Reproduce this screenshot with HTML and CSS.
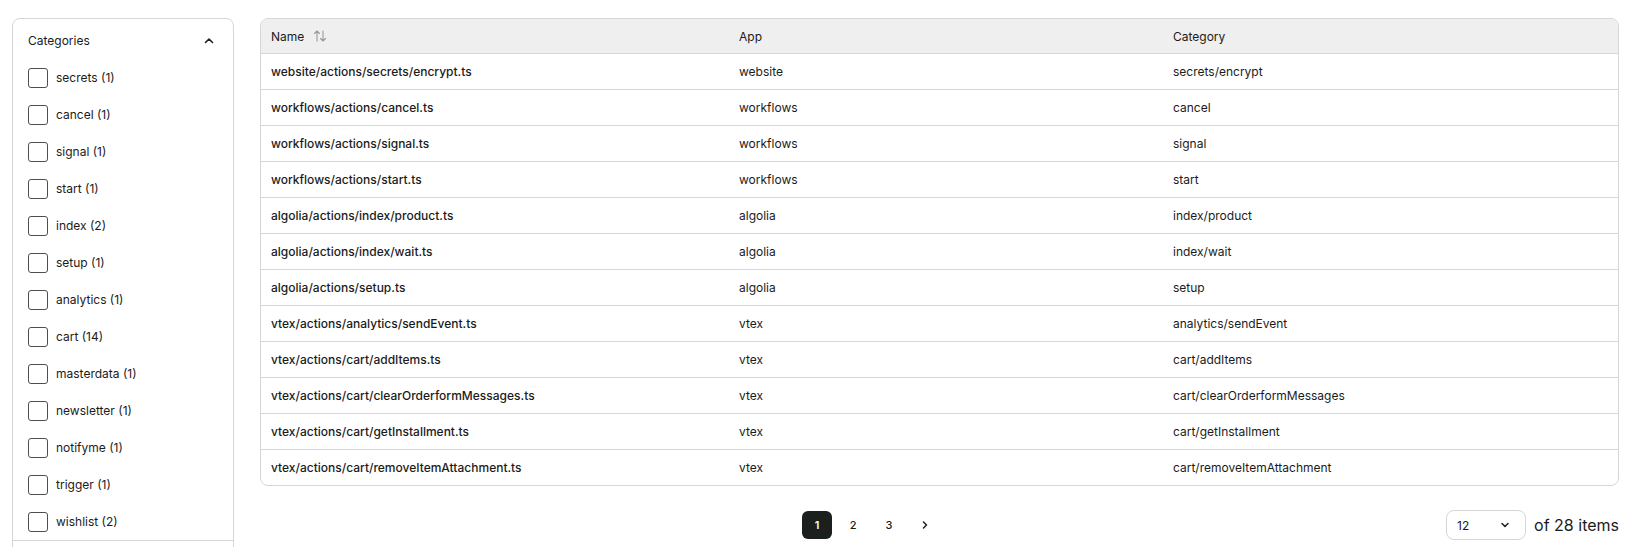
FILE: index.html
```html
<!DOCTYPE html>
<html lang="en">
<head>
    <meta charset="UTF-8">
    <meta name="viewport" content="width=device-width, initial-scale=1.0">
    <title>Actions</title>
    <link rel="stylesheet" href="styles.css">
</head>
<body>
    <div class="layout">
        <aside class="sidebar">
            <div class="filter-header">
                <span>Categories</span>
                <svg class="chevron" width="12" height="12" viewBox="0 0 12 12"><path d="M2.5 7.5L6 4l3.5 3.5" fill="none" stroke="#1f1f1f" stroke-width="1.6" stroke-linecap="round" stroke-linejoin="round"/></svg>
            </div>
            <ul class="filter-list">
                <li><span class="checkbox"></span>secrets (1)</li>
                <li><span class="checkbox"></span>cancel (1)</li>
                <li><span class="checkbox"></span>signal (1)</li>
                <li><span class="checkbox"></span>start (1)</li>
                <li><span class="checkbox"></span>index (2)</li>
                <li><span class="checkbox"></span>setup (1)</li>
                <li><span class="checkbox"></span>analytics (1)</li>
                <li><span class="checkbox"></span>cart (14)</li>
                <li><span class="checkbox"></span>masterdata (1)</li>
                <li><span class="checkbox"></span>newsletter (1)</li>
                <li><span class="checkbox"></span>notifyme (1)</li>
                <li><span class="checkbox"></span>trigger (1)</li>
                <li><span class="checkbox"></span>wishlist (2)</li>
            </ul>
            <div class="filter-section"></div>
        </aside>

        <main class="content">
            <div class="table-card">
                <table>
                    <colgroup>
                        <col class="col-name">
                        <col class="col-app">
                        <col>
                    </colgroup>
                    <thead>
                        <tr>
                            <th>
                                <span class="sortable">Name
                                    <svg width="14" height="14" viewBox="0 0 14 14"><path d="M4 12V2M1.5 4.5L4 2l2.5 2.5M10 2v10M7.5 9.5L10 12l2.5-2.5" fill="none" stroke="#9a9a9a" stroke-width="1.1" stroke-linecap="round" stroke-linejoin="round"/></svg>
                                </span>
                            </th>
                            <th>App</th>
                            <th>Category</th>
                        </tr>
                    </thead>
                    <tbody>
                        <tr><td class="name">website/actions/secrets/encrypt.ts</td><td>website</td><td>secrets/encrypt</td></tr>
                        <tr><td class="name">workflows/actions/cancel.ts</td><td>workflows</td><td>cancel</td></tr>
                        <tr><td class="name">workflows/actions/signal.ts</td><td>workflows</td><td>signal</td></tr>
                        <tr><td class="name">workflows/actions/start.ts</td><td>workflows</td><td>start</td></tr>
                        <tr><td class="name">algolia/actions/index/product.ts</td><td>algolia</td><td>index/product</td></tr>
                        <tr><td class="name">algolia/actions/index/wait.ts</td><td>algolia</td><td>index/wait</td></tr>
                        <tr><td class="name">algolia/actions/setup.ts</td><td>algolia</td><td>setup</td></tr>
                        <tr><td class="name">vtex/actions/analytics/sendEvent.ts</td><td>vtex</td><td>analytics/sendEvent</td></tr>
                        <tr><td class="name">vtex/actions/cart/addItems.ts</td><td>vtex</td><td>cart/addItems</td></tr>
                        <tr><td class="name">vtex/actions/cart/clearOrderformMessages.ts</td><td>vtex</td><td>cart/clearOrderformMessages</td></tr>
                        <tr><td class="name">vtex/actions/cart/getInstallment.ts</td><td>vtex</td><td>cart/getInstallment</td></tr>
                        <tr><td class="name">vtex/actions/cart/removeItemAttachment.ts</td><td>vtex</td><td>cart/removeItemAttachment</td></tr>
                    </tbody>
                </table>
            </div>

            <div class="table-footer">
                <nav class="pager">
                    <button class="page-btn hidden">
                        <svg width="10" height="10" viewBox="0 0 10 10"><path d="M6.5 2L3.5 5l3 3" fill="none" stroke="#1f1f1f" stroke-width="1.5" stroke-linecap="round" stroke-linejoin="round"/></svg>
                    </button>
                    <button class="page-btn active">1</button>
                    <button class="page-btn">2</button>
                    <button class="page-btn">3</button>
                    <button class="page-btn">
                        <svg width="10" height="10" viewBox="0 0 10 10"><path d="M3.5 2l3 3-3 3" fill="none" stroke="#1f1f1f" stroke-width="1.5" stroke-linecap="round" stroke-linejoin="round"/></svg>
                    </button>
                </nav>
                <div class="per-page">
                    <div class="select">
                        <span>12</span>
                        <svg width="12" height="12" viewBox="0 0 12 12"><path d="M3 4.5L6 7.5l3-3" fill="none" stroke="#1f1f1f" stroke-width="1.5" stroke-linecap="round" stroke-linejoin="round"/></svg>
                    </div>
                    <span class="total">of 28 items</span>
                </div>
            </div>
        </main>
    </div>
</body>
</html>
```

FILE: styles.css
```css
:root {
    --text-color: #1b1b1b;
    --border-color: #d5d7d7;
    --header-bg: #efefef;
    --radius: 8px;
}

html, body {
    height: 100%;
}

body {
    font-family: Inter, 'Noto Sans', sans-serif;
    color: var(--text-color);
    background-color: #ffffff;
    margin: 0;
    padding: 18px 12px 0 12px;
    box-sizing: border-box;
    overflow: hidden;
    font-size: 12px;
}

.layout {
    display: flex;
    gap: 26px;
    align-items: flex-start;
}

/* sidebar filters */

.sidebar {
    width: 222px;
    box-sizing: border-box;
    flex-shrink: 0;
    border: 1px solid var(--border-color);
    border-radius: var(--radius);
}

.filter-header {
    display: flex;
    align-items: flex-start;
    justify-content: space-between;
    height: 40px;
    box-sizing: border-box;
    padding: 12px 18px 0 15px;
    line-height: 20px;
}

.chevron {
    margin-top: 4px;
}

.filter-list {
    list-style: none;
    margin: 0;
    padding: 0 0 0 15px;
}

.filter-list li {
    display: flex;
    align-items: center;
    gap: 8px;
    height: 37px;
}

.checkbox {
    width: 18px;
    height: 18px;
    border: 1px solid #4d4f4f;
    border-radius: 3px;
}

.filter-section {
    height: 40px;
    border-top: 1px solid var(--border-color);
}

/* table */

.content {
    flex: 1;
    min-width: 0;
}

.table-card {
    border: 1px solid var(--border-color);
    border-radius: var(--radius);
    overflow: hidden;
}

table {
    width: 100%;
    border-collapse: separate;
    border-spacing: 0;
    table-layout: fixed;
}

.col-name {
    width: 468px;
}

.col-app {
    width: 434px;
}

th {
    background-color: var(--header-bg);
    text-align: left;
    font-weight: 400;
    height: 34px;
    padding: 0 10px;
    border-bottom: 1px solid var(--border-color);
}

td {
    height: 35px;
    padding: 0 10px;
    white-space: nowrap;
}

tbody tr:not(:last-child) td {
    border-bottom: 1px solid var(--border-color);
}

td.name {
    font-weight: 500;
}

.sortable {
    display: inline-flex;
    align-items: center;
    gap: 9px;
}

/* footer */

.table-footer {
    display: flex;
    align-items: center;
    margin-top: 24px;
}

.pager {
    flex: 1;
    display: flex;
    justify-content: center;
    gap: 6px;
}

.page-btn {
    width: 30px;
    height: 28px;
    border: none;
    border-radius: 6px;
    background: transparent;
    color: var(--text-color);
    font-family: inherit;
    font-size: 11px;
    font-weight: 500;
    display: flex;
    align-items: center;
    justify-content: center;
    padding: 0;
}

.page-btn.active {
    background-color: #1b1f1e;
    color: #ffffff;
    font-weight: 600;
}

.page-btn.hidden {
    visibility: hidden;
}

.per-page {
    display: flex;
    align-items: center;
    gap: 8px;
}

.select {
    width: 80px;
    height: 30px;
    box-sizing: border-box;
    border: 1px solid var(--border-color);
    border-radius: var(--radius);
    display: flex;
    align-items: center;
    justify-content: space-between;
    padding: 0 14px 0 10px;
    font-size: 12px;
}

.total {
    font-size: 16px;
}
```
